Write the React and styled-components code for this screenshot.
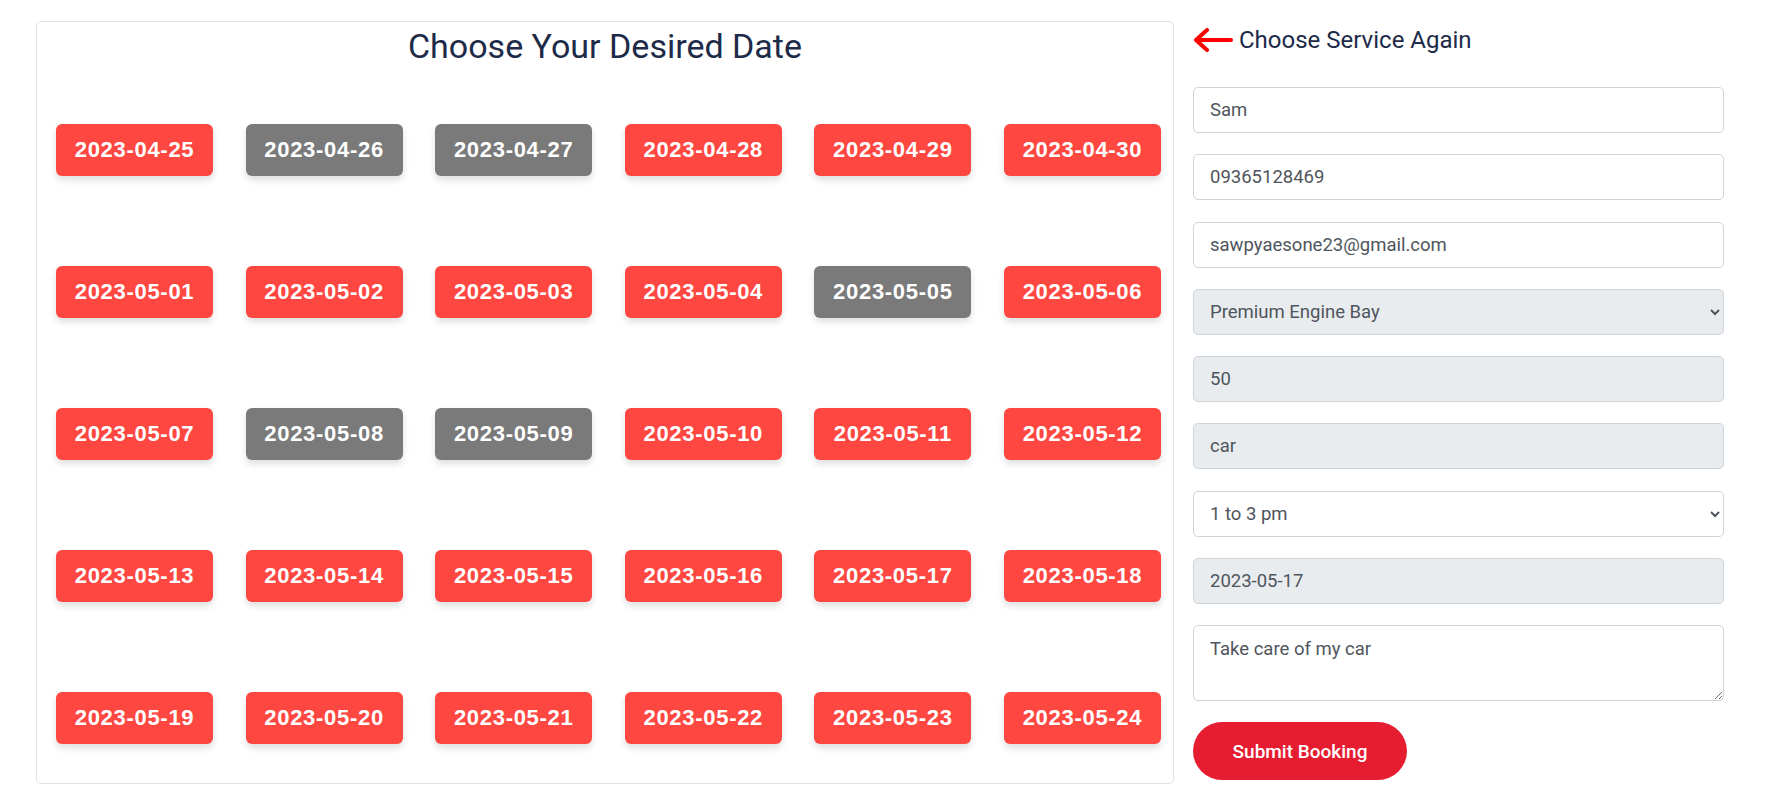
import React from "react"
import styled, { createGlobalStyle } from "styled-components"

const GlobalStyle = createGlobalStyle`
  body {
    margin: 0;
    background: #fff;
    font-family: Roboto, "Liberation Sans", sans-serif;
  }
`

const Page = styled.div`
  display: flex;
  align-items: flex-start;
  gap: 19px;
  padding: 21px 0 0 36px;
`

const DateCard = styled.section`
  box-sizing: border-box;
  width: 1138px;
  height: 763px;
  padding-top: 5px;
  border: 1px solid #dfe2e6;
  border-radius: 5px;
`

const Title = styled.h2`
  margin: 0;
  font-size: 34px;
  line-height: 38px;
  font-weight: 400;
  color: #1d2a48;
  text-align: center;
`

const DateGrid = styled.div`
  display: grid;
  grid-template-columns: repeat(6, 157px);
  grid-auto-rows: 52px;
  justify-content: space-between;
  row-gap: 90px;
  margin-top: 59px;
  padding: 0 12px 0 19px;
`

const DateButton = styled.button`
  border: none;
  border-radius: 6px;
  background: ${(p) => (p.$booked ? "#7a7a7a" : "#ff4742")};
  box-shadow: 0 4px 7px rgba(0, 0, 0, 0.13);
  color: #fff;
  font-family: "Liberation Sans", Arial, sans-serif;
  font-weight: 700;
  font-size: 22px;
  letter-spacing: 0.7px;
  cursor: pointer;
`

const FormColumn = styled.form`
  width: 531px;
  padding-top: 6px;
`

const BackLink = styled.a`
  display: flex;
  align-items: center;
  gap: 6px;
  margin-bottom: 34px;
  font-size: 24px;
  line-height: 26px;
  font-weight: 400;
  color: #1d2a48;
  text-decoration: none;
`

const Fields = styled.div`
  display: flex;
  flex-direction: column;
  gap: 21.3px;
`

const fieldBase = `
  box-sizing: border-box;
  width: 100%;
  margin: 0;
  padding: 0 16px;
  border: 1px solid #ced4da;
  border-radius: 5px;
  font-family: Roboto, "Liberation Sans", sans-serif;
  font-size: 18.5px;
  color: #4f555c;
  outline: none;
`

const TextInput = styled.input`
  ${fieldBase}
  height: 46px;
  background: ${(p) => (p.$locked ? "#e9ecef" : "#fff")};
`

const Select = styled.select`
  ${fieldBase}
  height: 46px;
  padding-left: 12px;
  background-color: ${(p) => (p.$locked ? "#e9ecef" : "#fff")};
`

const Note = styled.textarea`
  ${fieldBase}
  height: 76px;
  padding: 10px 16px;
  line-height: 1.5;
  background: #fff;
  resize: both;
`

const SubmitButton = styled.button`
  margin-top: 21px;
  width: 214px;
  height: 58px;
  border: none;
  border-radius: 30px;
  background: #e61c31;
  color: #fff;
  font-family: Roboto, "Liberation Sans", sans-serif;
  font-size: 19px;
  font-weight: 500;
  cursor: pointer;
`

const dates = [
  "2023-04-25", "2023-04-26", "2023-04-27", "2023-04-28", "2023-04-29", "2023-04-30",
  "2023-05-01", "2023-05-02", "2023-05-03", "2023-05-04", "2023-05-05", "2023-05-06",
  "2023-05-07", "2023-05-08", "2023-05-09", "2023-05-10", "2023-05-11", "2023-05-12",
  "2023-05-13", "2023-05-14", "2023-05-15", "2023-05-16", "2023-05-17", "2023-05-18",
  "2023-05-19", "2023-05-20", "2023-05-21", "2023-05-22", "2023-05-23", "2023-05-24",
]

const booked = ["2023-04-26", "2023-04-27", "2023-05-05", "2023-05-08", "2023-05-09"]

const BackArrow = () => (
  <svg width="40" height="24" viewBox="0 0 40 24" fill="none">
    <path
      d="M38 12H4M14 2L3 12L14 22"
      stroke="#ff0000"
      strokeWidth="4"
      strokeLinecap="round"
      strokeLinejoin="round"
    />
  </svg>
)

const App = () => {
  return (
    <>
      <GlobalStyle />
      <Page>
        <DateCard>
          <Title>Choose Your Desired Date</Title>
          <DateGrid>
            {dates.map((d) => (
              <DateButton key={d} type="button" $booked={booked.includes(d)}>
                {d}
              </DateButton>
            ))}
          </DateGrid>
        </DateCard>

        <FormColumn onSubmit={(e) => e.preventDefault()}>
          <BackLink href="#">
            <BackArrow />
            Choose Service Again
          </BackLink>
          <Fields>
            <TextInput defaultValue="Sam" />
            <TextInput defaultValue="09365128469" />
            <TextInput defaultValue="sawpyaesone23@gmail.com" />
            <Select $locked defaultValue="engine">
              <option value="engine">Premium Engine Bay</option>
            </Select>
            <TextInput $locked readOnly value="50" />
            <TextInput $locked readOnly value="car" />
            <Select defaultValue="1-3">
              <option value="1-3">1 to 3 pm</option>
            </Select>
            <TextInput $locked readOnly value="2023-05-17" />
            <Note defaultValue="Take care of my car" />
          </Fields>
          <SubmitButton type="submit">Submit Booking</SubmitButton>
        </FormColumn>
      </Page>
    </>
  )
}

export default App
